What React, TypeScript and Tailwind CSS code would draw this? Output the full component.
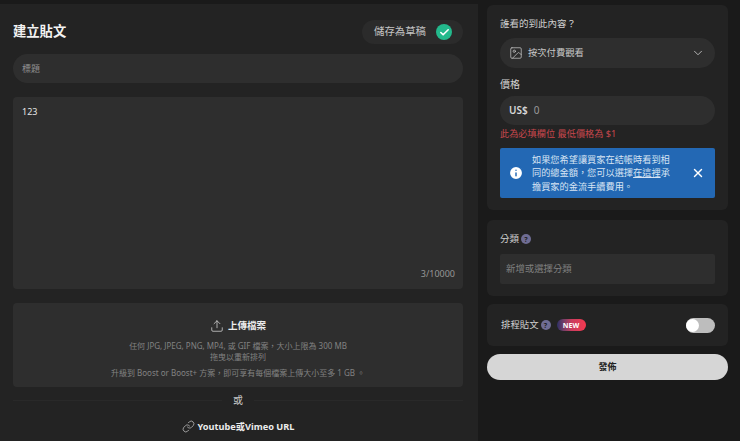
import { Link as LinkIcon, Upload, ChevronDown, Image as ImageIcon, X, Check, Info } from "lucide-react";

const FONT = "font-['Noto_Sans','Noto_Sans_CJK_TC',sans-serif]";

function Help() {
  return (
    <span className="flex h-[10px] w-[10px] items-center justify-center rounded-full bg-[#6f6d94] text-[7px] leading-none font-bold text-[#1f1f1f]">?</span>
  );
}

export default function App() {
  return (
    <div className={`${FONT} flex h-[441px] w-[740px] overflow-hidden bg-[#1a1a1a]`}>
      <main className="mt-[4px] flex h-[437px] w-[478px] shrink-0 flex-col bg-[#232323] pl-[13px] pr-[15px]">
        <header className="mt-[16px] flex h-[24px] items-center justify-between">
          <h1 className="text-[13.3px] leading-none font-bold text-[#f2f2f2]">建立貼文</h1>
          <div className="flex h-[24px] w-[101px] items-center justify-between rounded-full bg-[#2b2b2b] pl-[12px] pr-[11px]">
            <span className="text-[10.4px] text-[#c4c4c4]">儲存為草稿</span>
            <span className="flex h-[16px] w-[16px] items-center justify-center rounded-full bg-[#23b98c]">
              <Check size={11} strokeWidth={3.5} className="text-white" />
            </span>
          </div>
        </header>
        <div className="mt-[10px] flex h-[29px] items-center rounded-full bg-[#2e2e2e] px-[9px] pt-[1px] text-[9px] text-[#8f8f8f]">標題</div>
        <div className="relative mt-[14px] h-[192px] rounded-[4px] bg-[#2e2e2e] px-[9px] pt-[8px] text-[9px] leading-[14px] text-[#e6e6e6]">
          123
          <span className="absolute right-[8px] bottom-[8px] text-[9px] text-[#969696]">3/10000</span>
        </div>
        <section className="mt-[14px] flex h-[84px] flex-col items-center rounded-[4px] bg-[#2e2e2e] pt-[16px]">
          <div className="flex h-[14px] items-center gap-[4px]">
            <Upload size={14} strokeWidth={1.3} className="text-[#d8d8d8]" />
            <span className="text-[9.5px] font-bold text-[#ececec]">上傳檔案</span>
          </div>
          <p className="mt-[7px] text-[8px] leading-[11px] text-[#828282]">任何 JPG, JPEG, PNG, MP4, 或 GIF 檔案，大小上限為 300 MB</p>
          <p className="text-[8px] leading-[11px] text-[#828282]">拖曳以重新排列</p>
          <p className="mt-[5px] text-[8px] leading-[11px] text-[#828282]">升級到 Boost or Boost+ 方案，即可享有每個檔案上傳大小至多 1 GB 。</p>
        </section>
        <div className="mt-[6px] flex h-[14px] items-center gap-[11px]">
          <div className="h-px flex-1 bg-[#292929]" />
          <span className="text-[10px] leading-none text-[#c8c8c8]">或</span>
          <div className="h-px flex-1 bg-[#292929]" />
        </div>
        <div className="mt-[13px] flex items-center justify-center gap-[3px]">
          <LinkIcon size={13} strokeWidth={1.3} className="text-[#cfcfcf]" />
          <span className="text-[9.2px] font-bold text-[#ececec]">Youtube或Vimeo URL</span>
        </div>
      </main>

      <aside className="ml-[9px] flex w-[241px] shrink-0 flex-col pt-[5px]">
        <section className="flex h-[205px] flex-col rounded-[6px] bg-[#232323] px-[13px]">
          <p className="mt-[12px] text-[9.5px] leading-[14px] text-[#d0d0d0]">誰看的到此內容？</p>
          <div className="mt-[7px] flex h-[30px] items-center justify-between rounded-full bg-[#2e2e2e] pl-[9px] pr-[10px]">
            <div className="flex items-center gap-[5px]">
              <ImageIcon size={14} strokeWidth={1.2} className="text-[#cfcfcf]" />
              <span className="text-[9.3px] text-[#c8c8c8]">按次付費觀看</span>
            </div>
            <ChevronDown size={14} strokeWidth={1.4} className="text-[#cfcfcf]" />
          </div>
          <p className="mt-[9px] text-[10px] leading-[14px] text-[#d0d0d0]">價格</p>
          <div className="mt-[5px] flex h-[29px] items-center gap-[6px] rounded-full bg-[#2e2e2e] pl-[9px]">
            <span className="text-[10px] font-semibold text-[#d8d8d8]">US$</span>
            <span className="text-[10px] text-[#9a9a9a]">0</span>
          </div>
          <p className="mt-[2px] text-[9.2px] leading-[14px] text-[#c9474d]">此為必填欄位 最低價格為 $1</p>
          <div className="mt-[7px] flex h-[50px] items-center rounded-[2px] bg-[#2368b4] pl-[8px] pr-[10px]">
            <Info size={16} strokeWidth={2.2} className="shrink-0 fill-white text-[#2368b4]" />
            <p className="ml-[8px] w-[144px] text-[9.2px] leading-[13.5px] text-[#d7e4f3]">如果您希望讓買家在結帳時看到相同的總金額，您可以選擇<span className="underline">在這裡</span>承擔買家的金流手續費用。</p>
            <X size={14} strokeWidth={2.4} className="ml-auto text-white" />
          </div>
        </section>

        <section className="mt-[10px] flex h-[76px] flex-col rounded-[6px] bg-[#232323] px-[13px]">
          <div className="mt-[12px] flex items-center gap-[2px]">
            <span className="text-[9.5px] leading-[14px] text-[#d0d0d0]">分類</span>
            <Help />
          </div>
          <div className="mt-[8px] flex h-[30px] items-center rounded-[2px] bg-[#2e2e2e] px-[6px] text-[9.4px] text-[#808080]">新增或選擇分類</div>
        </section>

        <section className="mt-[8px] flex h-[42px] items-center rounded-[6px] bg-[#232323] pl-[14px] pr-[13px]">
          <span className="text-[9.4px] text-[#d0d0d0]">排程貼文</span>
          <span className="ml-[2px]"><Help /></span>
          <span className="ml-[6px] flex h-[12px] w-[29px] items-center justify-center rounded-full bg-gradient-to-r from-[#2c2f66] via-[#c93c5e] to-[#f5394f] text-[7px] leading-none font-bold text-white">NEW</span>
          <span className="ml-auto flex h-[15px] w-[29px] items-center rounded-full bg-[#bdbdbd]">
            <span className="h-[13px] w-[13px] rounded-full bg-white" />
          </span>
        </section>

        <button className="mt-[8px] h-[26px] rounded-full bg-[#d6d6d6] text-[9px] font-bold text-[#222222]">發佈</button>
      </aside>
    </div>
  );
}
